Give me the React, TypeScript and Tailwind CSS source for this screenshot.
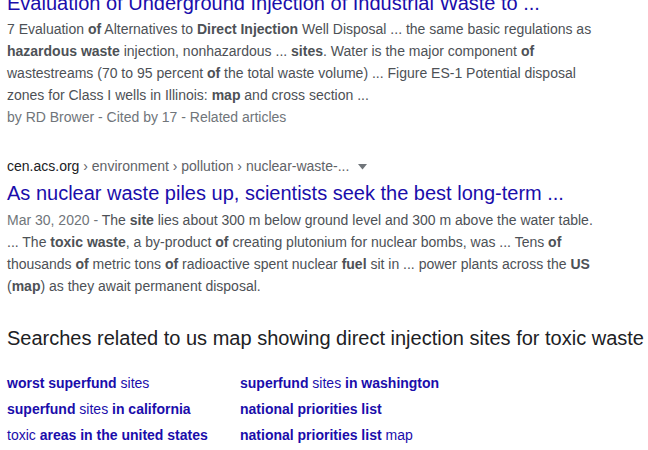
export default function App() {
  const sans = "font-['Liberation_Sans',Arial,sans-serif]";
  return (
    <div className={`${sans} h-[450px] w-[648px] overflow-hidden bg-white px-[7px]`}>
      {/* result 1, scrolled partly off the top */}
      <div className="-mt-[10px]">
        <h3 className="truncate text-[20px] leading-[26px] text-[#1a0dab]">
          Evaluation of Underground Injection of Industrial Waste to ...
        </h3>
        <div className="mt-[2px] w-[590px] text-[14px] leading-[22px] text-[#4d5156]">
          7 Evaluation <b>of</b> Alternatives to <b>Direct Injection</b> Well Disposal ... the same basic regulations as{" "}
          <b>hazardous waste</b> injection, nonhazardous ... <b>sites</b>. Water is the major component <b>of</b>{" "}
          wastestreams (70 to 95 percent <b>of</b> the total waste volume) ... Figure ES-1 Potential disposal
          zones for Class I wells in Illinois: <b>map</b> and cross section ...
          <div className="text-[#70757a]">by RD Brower - Cited by 17 - Related articles</div>
        </div>
      </div>

      {/* result 2 */}
      <div className="mt-[26px]">
        <div className="flex items-center text-[14px] leading-[24px]">
          <span className="text-[#202124]">cen.acs.org</span>
          <span className="text-[#5f6368]">&nbsp;› environment › pollution › nuclear-waste-...</span>
          <svg className="ml-[9px] mt-[1px]" width="9" height="6" viewBox="0 0 9 6">
            <path d="M0 0h9L4.5 5.5z" fill="#70757a" />
          </svg>
        </div>
        <h3 className="mt-[2px] text-[20px] leading-[26px] text-[#1a0dab]">
          As nuclear waste piles up, scientists seek the best long-term ...
        </h3>
        <div className="mt-[3px] w-[595px] text-[14px] leading-[22px] text-[#4d5156]">
          <span className="text-[#70757a]">Mar 30, 2020 - </span>The <b>site</b> lies about 300 m below ground level and 300 m above the water table.{" "}
          ... The <b>toxic waste</b>, a by-product <b>of</b> creating plutonium for nuclear bombs, was ... Tens <b>of</b>{" "}
          thousands <b>of</b> metric tons <b>of</b> radioactive spent nuclear <b>fuel</b> sit in ... power plants across the <b>US</b>{" "}
          (<b>map</b>) as they await permanent disposal.
        </div>
      </div>

      {/* related searches */}
      <h2 className="mt-[28px] whitespace-nowrap text-[20px] leading-[26px] text-[#202124]">
        Searches related to us map showing direct injection sites for toxic waste
      </h2>
      <div className="mt-[19px] grid grid-cols-[233px_1fr] text-[14px] leading-[26px] text-[#1a0dab]">
        <div><b>worst superfund</b> sites</div>
        <div><b>superfund</b> sites <b>in washington</b></div>
        <div><b>superfund</b> sites <b>in california</b></div>
        <div><b>national priorities list</b></div>
        <div>toxic <b>areas in the united states</b></div>
        <div><b>national priorities list</b> map</div>
      </div>
    </div>
  );
}
